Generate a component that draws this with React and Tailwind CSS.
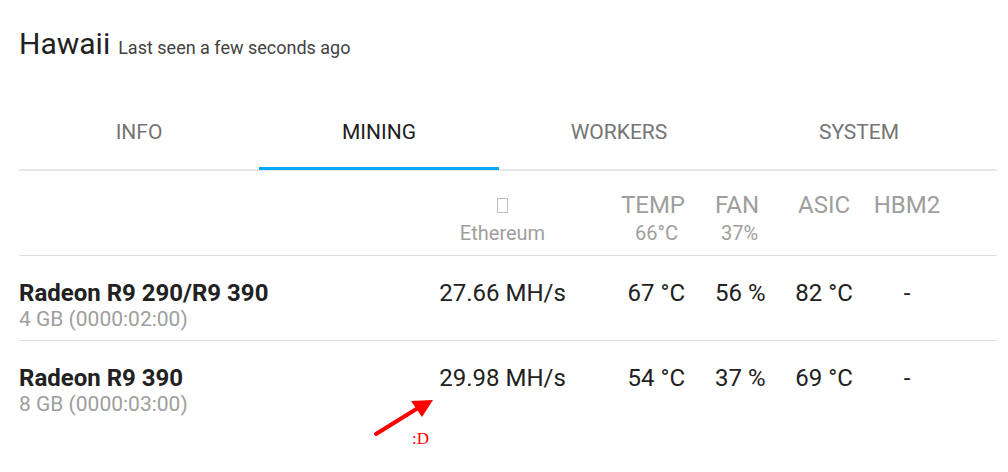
import React from "react";

const tabs = ["Info", "Mining", "Workers", "System"];

const gpus = [
  { name: "Radeon R9 290/R9 390", sub: "4 GB (0000:02:00)", hash: "27.66 MH/s", temp: "67 °C", fan: "56 %", asic: "82 °C", hbm: "-" },
  { name: "Radeon R9 390", sub: "8 GB (0000:03:00)", hash: "29.98 MH/s", temp: "54 °C", fan: "37 %", asic: "69 °C", hbm: "-" },
];

function App() {
  return (
    <div className="relative min-h-[472px] w-[1008px] bg-white font-['Roboto','Liberation_Sans',sans-serif] text-[#212121]">
      <div className="flex w-[997px] flex-col pl-[19px] pt-[26px]">
        <div className="flex items-baseline gap-[8px] leading-[36px]">
          <h1 className="text-[30px] text-[#212121]">Hawaii</h1>
          <span className="text-[18px] text-[#424242]">Last seen a few seconds ago</span>
        </div>

        <div className="mt-[32px] flex h-[73px] border-b-2 border-[#e6e6e6]">
          {tabs.map((t) => (
            <div
              key={t}
              className={`relative flex w-[240px] items-center justify-center pb-[1px] text-[21px] uppercase ${
                t === "Mining" ? "text-[#212121]" : "text-[#757575]"
              }`}
            >
              {t}
              {t === "Mining" ? <div className="absolute bottom-[-1px] left-0 h-[3px] w-full bg-[#03a9f4]" /> : null}
            </div>
          ))}
        </div>

        <div className="flex h-[85px] border-b border-[#e0e0e0] pt-[20px] text-[#9e9e9e]">
          <div className="w-[401px]" />
          <div className="flex w-[165px] flex-col items-center">
            <div className="flex h-[28px] items-center">
              <span className="inline-block h-[15px] w-[11px] border border-[#bdbdbd]" />
            </div>
            <div className="text-[20px] leading-[28px]">Ethereum</div>
          </div>
          <div className="flex w-[100px] flex-col items-end">
            <div className="text-[24px] leading-[28px]">TEMP</div>
            <div className="pr-[7px] text-[20px] leading-[28px]">66°C</div>
          </div>
          <div className="flex w-[90px] flex-col pl-[30px]">
            <div className="text-[24px] leading-[28px]">FAN</div>
            <div className="pl-[6px] text-[20px] leading-[28px]">37%</div>
          </div>
          <div className="w-[98px] text-center text-[24px] leading-[28px]">ASIC</div>
          <div className="w-[68px] text-center text-[24px] leading-[28px]">HBM2</div>
        </div>

        {gpus.map((g, i) => (
          <div
            key={g.name}
            className={`flex h-[85px] pt-[23px] ${i === 0 ? "border-b border-[#e0e0e0]" : ""}`}
          >
            <div className="flex w-[401px] flex-col">
              <div className="text-[24px] font-bold leading-[28px] text-[#212121]">{g.name}</div>
              <div className="text-[21px] leading-[24px] text-[#9e9e9e]">{g.sub}</div>
            </div>
            <div className="w-[165px] text-center text-[24px] leading-[28px]">{g.hash}</div>
            <div className="w-[100px] text-right text-[24px] leading-[28px]">{g.temp}</div>
            <div className="w-[90px] pl-[30px] text-[24px] leading-[28px]">{g.fan}</div>
            <div className="w-[98px] text-center text-[24px] leading-[28px]">{g.asic}</div>
            <div className="w-[68px] text-center text-[24px] leading-[28px]">{g.hbm}</div>
          </div>
        ))}
      </div>

      <svg className="absolute left-[370px] top-[395px]" width="70" height="45" viewBox="0 0 70 45">
        <line x1="6" y1="39" x2="48" y2="13" stroke="#ff0000" strokeWidth="4" strokeLinecap="round" />
        <polygon points="63,5 41,6 52,22" fill="#ff0000" />
      </svg>
      <span className="absolute left-[412px] top-[429px] font-['Liberation_Serif',serif] text-[17px] leading-[20px] text-[#ff0000]">
        :D
      </span>
    </div>
  );
}

export default App;
